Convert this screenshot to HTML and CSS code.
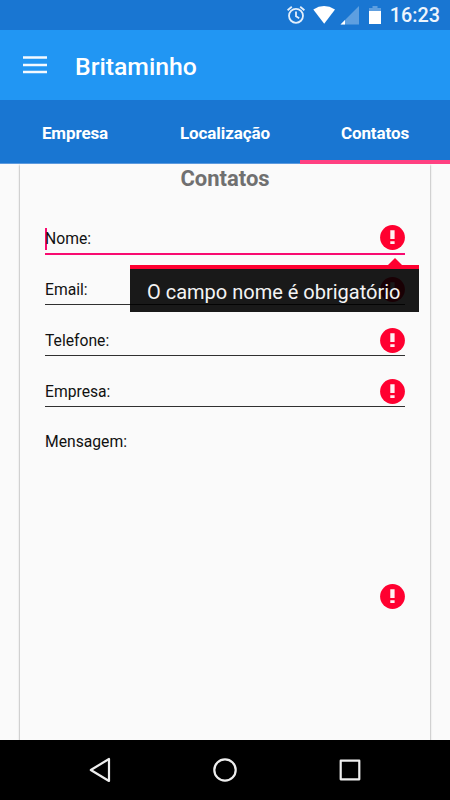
FILE: index.html
```html
<!DOCTYPE html>
<html lang="pt-BR">
<head>
<meta charset="utf-8">
<title>Britaminho</title>
<link rel="stylesheet" href="styles.css">
</head>
<body>
<svg class="defs" aria-hidden="true">
  <symbol id="error" viewBox="0 0 25 25">
    <circle cx="12.5" cy="12.5" r="12.4" fill="#ff0030"/>
    <path d="M10.3 5.2h4.3v8.8h-4.3zM10.3 16.2h4.3v2.8h-4.3z" fill="#fff0f2"/>
  </symbol>
</svg>
<div class="screen">
  <div class="status">
    <svg class="status-icons" viewBox="0 0 100 30">
      <g fill="none" stroke="#e4effb" stroke-width="1.8">
        <circle cx="11" cy="15.8" r="7"/>
        <path d="M11 11.5v4.8l3.2 2M2.6 10.2l4.2-3.5M15.2 6.7l4.2 3.5"/>
      </g>
      <path d="M28.3 9.4Q39 2.5 50 9.4L39.2 23.8z" fill="#fff"/>
      <path d="M74 6v18.500H55.500z" fill="#5e9fe0"/>
      <path d="M60 20v4.500H55.500z" fill="#fff"/>
      <path d="M84 8h3.500V6h5v2H96v4H84z" fill="#5e9fe0"/>
      <path d="M84 11h12v13H84z" fill="#fff"/>
    </svg>
    <span class="clock">16:23</span>
  </div>
  <header class="appbar">
    <svg class="menu" viewBox="0 0 24 18"><path d="M0 1.500h24M0 9h24M0 16h24" stroke="#f4faff" stroke-width="2.600"/></svg>
    <h1>Britaminho</h1>
  </header>
  <nav class="tabs">
    <span class="tab">Empresa</span>
    <span class="tab">Localização</span>
    <span class="tab active">Contatos</span>
  </nav>
  <main class="content">
    <section class="card">
      <h2>Contatos</h2>
      <div class="field focused">
        <span class="label">Nome:</span>
        <svg class="error"><use href="#error"/></svg>
        <div class="tooltip">O campo nome é obrigatório</div>
      </div>
      <div class="field"><span class="label">Email:</span><svg class="error"><use href="#error"/></svg></div>
      <div class="field"><span class="label">Telefone:</span><svg class="error"><use href="#error"/></svg></div>
      <div class="field"><span class="label">Empresa:</span><svg class="error"><use href="#error"/></svg></div>
      <div class="field message"><span class="label">Mensagem:</span><svg class="error"><use href="#error"/></svg></div>
    </section>
  </main>
  <footer class="navbar">
    <svg viewBox="0 0 30 30"><path d="M24 4v22L5.800 15z"/></svg>
    <svg viewBox="0 0 30 30"><circle cx="15" cy="15" r="10.700"/></svg>
    <svg viewBox="0 0 30 30"><path d="M5.700 5.700h18.600v18.600H5.700z"/></svg>
  </footer>
</div>
</body>
</html>
```
FILE: styles.css
```css
* { box-sizing: border-box; }
body { margin: 0; font-family: Roboto, sans-serif; }
.defs { position: absolute; width: 0; height: 0; }
.screen {
  width: 450px;
  height: 800px;
  display: flex;
  flex-direction: column;
  overflow: hidden;
  background: #fafafa;
}
.status {
  height: 30px;
  flex: none;
  display: flex;
  justify-content: flex-end;
  align-items: flex-start;
  gap: 5px;
  padding-right: 10px;
  background: #1976d2;
}
.status-icons { width: 100px; height: 30px; }
.clock { color: #eef5fd; font-size: 19.800px; font-weight: 500; line-height: 31px; }
.appbar {
  height: 70px;
  flex: none;
  display: flex;
  align-items: center;
  gap: 28px;
  padding: 3px 23px 0;
  background: #2196f3;
}
.menu { width: 24px; height: 18px; margin-top: -4px; }
h1 { margin: 0; color: #fff; font-size: 24.800px; font-weight: 500; line-height: 30px; }
.tabs {
  height: 64px;
  flex: none;
  display: grid;
  grid-template-columns: repeat(3, 1fr);
  background: #1976d2;
}
.tab {
  padding-top: 2px;
  text-align: center;
  color: #fff;
  font-size: 17px;
  font-weight: 700;
  letter-spacing: -0.100px;
  line-height: 62px;
  box-shadow: inset 0 -1px #5c9ade;
}
.tab.active { box-shadow: inset 0 -4px #ff4081; }
.content { flex: 1; padding: 0 20px; overflow: hidden; }
.card {
  height: 620px;
  padding: 0 25px;
  box-shadow: 0 1px 2px rgba(0, 0, 0, .5);
  background: #fafafa;
}
h2 {
  height: 40px;
  margin: 0;
  text-align: center;
  color: #707070;
  font-size: 22px;
  font-weight: 700;
  line-height: 30px;
}
.field {
  position: relative;
  height: 51px;
  display: flex;
  justify-content: space-between;
  align-items: flex-end;
  padding-bottom: 2px;
  border-bottom: 1px solid #303030;
}
.label { color: #111; font-size: 15.700px; line-height: 22px; padding-bottom: 1px; }
.error { width: 25px; height: 25px; flex: none; }
.focused { border-bottom: 2px solid #f80b70; padding-bottom: 3px; margin-bottom: -1px; }
.focused .label { box-shadow: inset 2px 0 #f80b70; padding-bottom: 0; }
.message { height: 203px; border: 0; }
.message .label { align-self: flex-start; margin-top: 24px; }
.message .error { margin-bottom: -1px; }
.tooltip {
  position: absolute;
  z-index: 1;
  top: 61px;
  left: 84.500px;
  width: 289px;
  height: 47px;
  padding-left: 17.500px;
  border-top: 4px solid #ff0030;
  background: rgba(0, 0, 0, .9);
  color: #f4f4f4;
  font-size: 20px;
  line-height: 46px;
  white-space: nowrap;
}
.tooltip::before {
  content: "";
  position: absolute;
  right: 17px;
  top: -11px;
  border: 7px solid transparent;
  border-top: 0;
  border-bottom-color: #ff0030;
}
.navbar {
  height: 60px;
  flex: none;
  display: flex;
  justify-content: space-between;
  align-items: center;
  padding: 0 85px;
  background: #000;
}
.navbar svg {
  width: 30px;
  height: 30px;
  fill: none;
  stroke: #eee;
  stroke-width: 2.200;
  stroke-linejoin: round;
}
```
